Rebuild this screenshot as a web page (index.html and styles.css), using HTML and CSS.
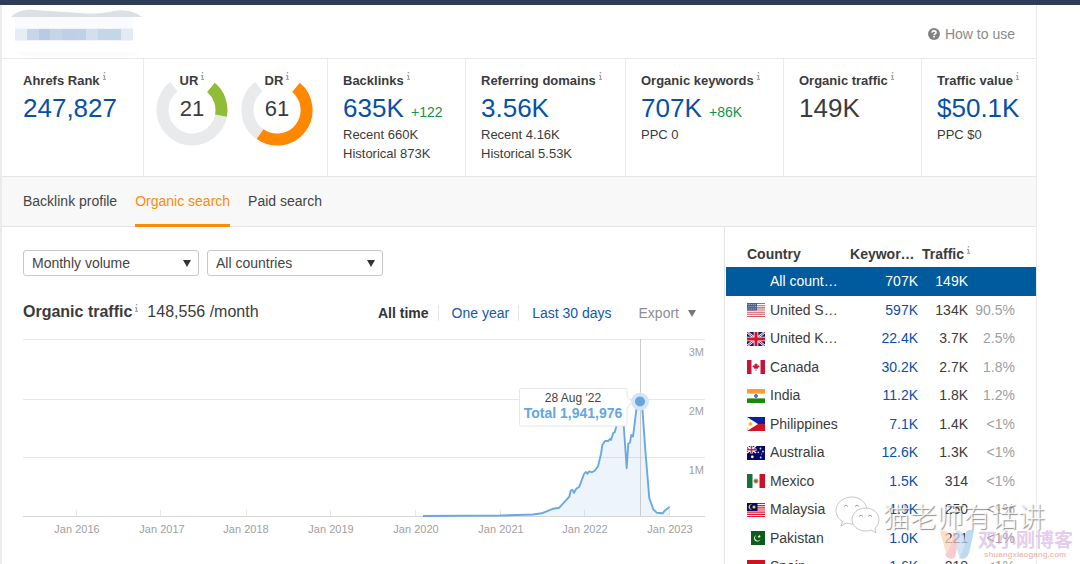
FILE: index.html
```html
<!DOCTYPE html>
<html lang="en">
<head>
<meta charset="utf-8">
<title>Site overview</title>
<link rel="stylesheet" href="styles.css">
</head>
<body>
<svg class="defs" aria-hidden="true">
  <symbol id="info" viewBox="0 0 3 8"><path d="M.8 0h1.400v1.500H.8zM0 3h2.200v4H3v1H0V7h.8V4H0z" fill="currentColor"/></symbol>
</svg>
<div class="topbar"></div>
<div class="page">
  <header class="header">
    <svg class="masked" viewBox="0 0 132 50" role="img" aria-label="Hidden site name">
      <path d="M0 10C6 4 14 2 24 3L76 6.500Q88 7 98 5Q118 0 131 10z" fill="#dcdfe4"/>
      <path d="M4 10h118v12h-118z" fill="#fafbfe"/>
      <path d="M4 21h118v13h-118z" fill="#f0f4fa"/>
      <path d="M4 22h12v11h-12z" fill="#e7edf6"/><path d="M16 22h12v11h-12z" fill="#c8d6e9"/>
      <path d="M28 22h11v11h-11z" fill="#b9cbe4"/><path d="M39 22h12v11h-12z" fill="#c5d5e8"/>
      <path d="M51 22h12v11h-12z" fill="#bfcfe6"/><path d="M63 22h12v11h-12z" fill="#c0d0e7"/>
      <path d="M75 22h12v11h-12z" fill="#d3dfee"/><path d="M87 22h23v11h-23z" fill="#c5d6e9"/>
      <path d="M110 22h12v11h-12z" fill="#e4e9f4"/>
      <path d="M4 45h126q-8 5-24 5h-76q-20 0-26-5z" fill="#fcfcfd"/>
    </svg>
    <a class="help" href="#"><svg class="help-icon" viewBox="0 0 12 12"><circle cx="6" cy="6" r="6" fill="#828282"/><path d="M4 4.600Q4.100 2.900 6 2.900Q8 2.900 8 4.500Q8 5.400 7 5.900Q6.100 6.300 6.100 7.200" fill="none" stroke="#fff" stroke-width="1.600"/><path d="M5.200 8.100h1.700v1.500h-1.700z" fill="#fff"/></svg>How to use</a>
  </header>

  <section class="metrics">
    <div class="metric first">
      <h2 class="label">Ahrefs Rank<svg class="info"><use href="#info"/></svg></h2>
      <p class="value"><a href="#">247,827</a></p>
    </div>
    <div class="metric gauges">
      <div class="gauge">
        <svg class="ring" viewBox="0 0 72 72" fill="none" stroke-width="12"><path d="M64.960 41.630A29.500 29.500 0 1 1 17.830 12.750" stroke="#e9eaec"/><path d="M54.970 13.400A29.500 29.500 0 0 1 64.960 41.630" stroke="#90bc37"/></svg>
        <h2 class="label">UR<svg class="info"><use href="#info"/></svg></h2>
        <p class="score">21</p>
      </div>
      <div class="gauge">
        <svg class="ring" viewBox="0 0 72 72" fill="none" stroke-width="12"><path d="M19.080 60.170A29.500 29.500 0 0 1 17.830 12.750" stroke="#e9eaec"/><path d="M54.970 13.400A29.500 29.500 0 0 1 19.080 60.170" stroke="#ff8800"/></svg>
        <h2 class="label">DR<svg class="info"><use href="#info"/></svg></h2>
        <p class="score">61</p>
      </div>
    </div>
    <div class="metric">
      <h2 class="label">Backlinks<svg class="info"><use href="#info"/></svg></h2>
      <p class="value"><a href="#">635K</a> <span class="delta">+122</span></p>
      <p class="note">Recent 660K</p>
      <p class="note">Historical 873K</p>
    </div>
    <div class="metric">
      <h2 class="label">Referring domains<svg class="info"><use href="#info"/></svg></h2>
      <p class="value"><a href="#">3.56K</a></p>
      <p class="note">Recent 4.16K</p>
      <p class="note">Historical 5.53K</p>
    </div>
    <div class="metric">
      <h2 class="label">Organic keywords<svg class="info"><use href="#info"/></svg></h2>
      <p class="value"><a href="#">707K</a> <span class="delta">+86K</span></p>
      <p class="note">PPC 0</p>
    </div>
    <div class="metric">
      <h2 class="label">Organic traffic<svg class="info"><use href="#info"/></svg></h2>
      <p class="value">149K</p>
    </div>
    <div class="metric">
      <h2 class="label">Traffic value<svg class="info"><use href="#info"/></svg></h2>
      <p class="value"><a href="#">$50.1K</a></p>
      <p class="note">PPC $0</p>
    </div>
  </section>

  <nav class="tabs">
    <a class="tab" href="#">Backlink profile</a>
    <a class="tab active" href="#">Organic search</a>
    <a class="tab" href="#">Paid search</a>
  </nav>

  <div class="content">
    <main class="main">
      <div class="filters">
        <span class="picker"><select class="select" aria-label="Volume"><option>Monthly volume</option></select></span>
        <span class="picker"><select class="select" aria-label="Country"><option>All countries</option></select></span>
      </div>
      <div class="chart-head">
        <h1 class="title">Organic traffic<svg class="info"><use href="#info"/></svg></h1>
        <span class="total">148,556 /month</span>
        <div class="ranges">
          <button class="range current" type="button">All time</button>
          <button class="range" type="button">One year</button>
          <button class="range" type="button">Last 30 days</button>
        </div>
        <button class="export" type="button">Export<span class="caret"></span></button>
      </div>
      <svg class="chart" viewBox="23 338 682 202">
        <g stroke="#e8e8e8"><path d="M23 339.500H705M23 399.500H705M23 457.500H705"/>
        <path d="M76.500 510v6M160.500 510v6M246.500 510v6M330.500 510v6M415.500 510v6M500.500 510v6M584.500 510v6M669.500 510v6"/></g>
        <path d="M23 516.500H705" stroke="#d6d6d6"/>
        <path d="M423 516L500 515.500L533 514.500L541.700 513.300L553.300 508.700L559.300 507.700L569.300 496.700L570.700 490.700L572.300 489.700L574 492.700L576 489L579.300 486.700L584 474L585.700 472L587.300 473.700L589.300 471.300L592 472.300L594.700 470.700L598 466.300L601 454L602.300 445L605 441L608.300 441L610 438.700L611 440L613.300 432.700L614.700 432.300L616.700 425L620 416L623.700 425L626.700 468.300L628.300 443.500L630 442.700L631.300 435L633 436.700L636.700 407L639.700 401.700L642.300 407L645.300 450L649.300 498.300L653.300 509.300L656.700 512.700L662.700 513.300L664.700 510.700L669.700 506.700V516z" fill="#5a94e0" fill-opacity=".1"/>
        <path d="M640.500 339V516" stroke="#ccc"/>
        <path d="M423 516L500 515.500L533 514.500L541.700 513.300L553.300 508.700L559.300 507.700L569.300 496.700L570.700 490.700L572.300 489.700L574 492.700L576 489L579.300 486.700L584 474L585.700 472L587.300 473.700L589.300 471.300L592 472.300L594.700 470.700L598 466.300L601 454L602.300 445L605 441L608.300 441L610 438.700L611 440L613.300 432.700L614.700 432.300L616.700 425L620 416L623.700 425L626.700 468.300L628.300 443.500L630 442.700L631.300 435L633 436.700L636.700 407L639.700 401.700L642.300 407L645.300 450L649.300 498.300L653.300 509.300L656.700 512.700L662.700 513.300L664.700 510.700L669.700 506.700" fill="none" stroke="#6aa9e0" stroke-width="1.900" stroke-linejoin="round"/>
        <circle cx="640" cy="401.500" r="9" fill="#d3e5f6"/><circle cx="640" cy="401.500" r="5" fill="#64a6df"/>
        <path d="M521 388.500H625.500a1.500 1.500 0 0 1 1.500 1.500V396L632 402L627 408V424.500a1.500 1.500 0 0 1-1.500 1.500H521a1.500 1.500 0 0 1-1.500-1.500V390a1.500 1.500 0 0 1 1.500-1.500z" fill="#fff" stroke="#e6e6e6"/>
        <g class="tip"><text class="tip-date" x="573" y="402">28 Aug '22</text><text class="tip-total" x="573" y="418">Total 1,941,976</text></g>
        <g class="y-labels"><text x="704" y="356">3M</text><text x="704" y="415">2M</text><text x="704" y="474">1M</text></g>
        <g class="x-labels"><text x="77" y="533">Jan 2016</text><text x="162" y="533">Jan 2017</text><text x="246" y="533">Jan 2018</text><text x="331" y="533">Jan 2019</text><text x="416" y="533">Jan 2020</text><text x="501" y="533">Jan 2021</text><text x="585" y="533">Jan 2022</text><text x="670" y="533">Jan 2023</text></g>
      </svg>
    </main>

    <aside class="countries">
      <table class="table">
        <colgroup><col class="c-flag"><col class="c-name"><col class="c-keys"><col class="c-traffic"><col class="c-share"></colgroup>
        <thead><tr><th class="h-country" colspan="2">Country</th><th class="h-keys">Keywords</th><th class="h-traffic" colspan="2">Traffic<svg class="info"><use href="#info"/></svg></th></tr></thead>
        <tbody>
          <tr class="selected"><td></td><td class="name">All countries</td><td class="num"><a href="#">707K</a></td><td class="num">149K</td><td></td></tr>
          <tr><td class="flag"><svg viewBox="0 0 18 14"><path fill="#fff" d="M0 0h18v14H0z"/><path d="M0 .5h18M0 2.700h18M0 4.900h18M0 7h18M0 9.200h18M0 11.300h18M0 13.500h18" stroke="#d4525e" stroke-width="1.100"/><path fill="#4b5f8c" d="M0 0h10v7.500H0z"/><path d="M.5 1.500h9M1 3.700h9M.5 5.900h9" stroke="#c3cbdc" stroke-width=".8" stroke-dasharray="1 .8"/></svg></td><td class="name">United States</td><td class="num"><a href="#">597K</a></td><td class="num">134K</td><td class="share">90.5%</td></tr>
          <tr><td class="flag"><svg viewBox="0 0 18 14"><path fill="#00207a" d="M0 0h18v14H0z"/><path d="M0 0L18 14M18 0L0 14" stroke="#fff" stroke-width="2.400"/><path d="M0 0L18 14M18 0L0 14" stroke="#d8203a"/><path d="M9 0v14M0 7h18" stroke="#fff" stroke-width="4.600"/><path d="M9 0v14M0 7h18" stroke="#d8102a" stroke-width="3"/></svg></td><td class="name">United Kingdom</td><td class="num"><a href="#">22.4K</a></td><td class="num">3.7K</td><td class="share">2.5%</td></tr>
          <tr><td class="flag"><svg viewBox="0 0 18 14"><path fill="#fff" d="M0 0h18v14H0z"/><path fill="#c71437" d="M0 0h4.500v14H0zM13.500 0H18v14h-4.500zM9 3l.9 1.500.8-.4-.2 2 1.400-.8.2.8.7.1-2 1.900.2.700-1.700-.2V11h-.6V8.600L7 8.800l.2-.7-2-1.900.7-.1.2-.8 1.400.8-.2-2 .8.400z"/></svg></td><td class="name">Canada</td><td class="num"><a href="#">30.2K</a></td><td class="num">2.7K</td><td class="share">1.8%</td></tr>
          <tr><td class="flag"><svg viewBox="0 0 18 14"><path fill="#fff" d="M0 0h18v14H0z"/><path fill="#ff9a36" d="M0 0h18v4.600H0z"/><path fill="#158a0c" d="M0 9.400h18V14H0z"/><circle cx="9" cy="7" r="1.500" fill="#7d7dc4" stroke="#33339b" stroke-width=".7"/></svg></td><td class="name">India</td><td class="num"><a href="#">11.2K</a></td><td class="num">1.8K</td><td class="share">1.2%</td></tr>
          <tr><td class="flag"><svg viewBox="0 0 18 14"><path fill="#0820a5" d="M0 0h18v7H0z"/><path fill="#d01428" d="M0 7h18v7H0z"/><path fill="#fff" d="M0 0l11 7-11 7z"/><path fill="#f7bd2b" d="M3.500 4.500l.7 1.300 1.600-.2-.8 1.400.8 1.400-1.600-.2-.7 1.300-.7-1.300-1.600.2.8-1.400-.8-1.400 1.600.2zM0 1l1.300 1.300L0 3zM0 11l1.300.8L0 13z"/></svg></td><td class="name">Philippines</td><td class="num"><a href="#">7.1K</a></td><td class="num">1.4K</td><td class="share">&lt;1%</td></tr>
          <tr><td class="flag"><svg viewBox="0 0 18 14"><path fill="#06066b" d="M0 0h18v14H0z"/><path d="M0 0l9 7M9 0L0 7" stroke="#fff" stroke-width="1.500"/><path d="M4.500 0v7.500M0 3.700h9.500" stroke="#fff" stroke-width="2.600"/><path d="M4.500 0v7.500M0 3.700h9.500" stroke="#e02038" stroke-width="1.400"/><circle cx="5.300" cy="10.800" r="1.400" fill="#fff"/><g fill="#dcdcf3"><circle cx="13.500" cy="2.500" r=".9"/><circle cx="11.300" cy="6.300" r=".9"/><circle cx="16" cy="5.500" r=".9"/><circle cx="13.700" cy="11.500" r=".9"/><circle cx="14.600" cy="8" r=".5"/></g></svg></td><td class="name">Australia</td><td class="num"><a href="#">12.6K</a></td><td class="num">1.3K</td><td class="share">&lt;1%</td></tr>
          <tr><td class="flag"><svg viewBox="0 0 18 14"><path fill="#fff" d="M0 0h18v14H0z"/><path fill="#16713a" d="M0 0h5.500v14H0z"/><path fill="#cf1126" d="M12.500 0H18v14h-5.500z"/><circle cx="9" cy="7" r="2.500" fill="#b3a478"/><path d="M7 7q2-3 3.500 0L9 9z" fill="#776033"/></svg></td><td class="name">Mexico</td><td class="num"><a href="#">1.5K</a></td><td class="num">314</td><td class="share">&lt;1%</td></tr>
          <tr><td class="flag"><svg viewBox="0 0 18 14"><path fill="#fff" d="M0 0h18v14H0z"/><path d="M0 .5h18M0 2.700h18M0 4.900h18M0 7h18M0 9.200h18M0 11.300h18M0 13.500h18" stroke="#e0142b" stroke-width="1.200"/><path fill="#08086b" d="M0 0h10.500v8H0z"/><path d="M5.200 1.600A2.600 2.600 0 1 0 5.200 6.300A2.200 2.200 0 1 1 5.200 1.600z" fill="#fdd20a"/><circle cx="7" cy="3.900" r="1.500" fill="#fdd20a"/></svg></td><td class="name">Malaysia</td><td class="num"><a href="#">1.9K</a></td><td class="num">250</td><td class="share">&lt;1%</td></tr>
          <tr><td class="flag"><svg viewBox="0 0 18 14"><path fill="#0b5d17" d="M4 0h14v14H4z"/><path d="M9.600 4A3.300 3.300 0 1 0 13.500 8.300A3 3 0 1 1 9.600 4z" fill="#fff"/><path d="M12.300 3.800l.5 1 1 .2-.8.700.2 1-1-.4-.9.600.1-1.100-.8-.7 1.100-.2z" fill="#fff"/></svg></td><td class="name">Pakistan</td><td class="num"><a href="#">1.0K</a></td><td class="num">221</td><td class="share">&lt;1%</td></tr>
          <tr><td class="flag"><svg viewBox="0 0 18 14"><path fill="#ffc400" d="M0 0h18v14H0z"/><path fill="#cf1220" d="M0 0h18v4H0zM0 10h18v4H0z"/></svg></td><td class="name">Spain</td><td class="num"><a href="#">1.6K</a></td><td class="num">218</td><td class="share">&lt;1%</td></tr>
        </tbody>
      </table>
    </aside>
  </div>
</div>

<div class="wm-chat">
  <svg class="wm-chat-icon" viewBox="0 0 46 40" fill="#fff" fill-opacity=".93" stroke="#b0b0b0" stroke-width=".7"><path d="M17 2C8 2 1 8 1 15.500C1 20 3.500 24 7.500 26.500L6 31L11.500 28Q14 29 17 29C25 29 32 23 32 15.500S25 2 17 2z"/><path d="M31 13C23 13 17 18 17 24.500S23 36 31 36Q34 36 36.500 35L41 38L40 33.500Q44 30 44 25C44 18 38 13 31 13z"/><path d="M9 11.500q2-3 4 0M20 11.500q2-3 4 0M24 21.500q2-3 4 0M33 21.500q2-3 4 0" stroke="#777" fill="none"/></svg>
  <span>猫老师有话讲</span>
</div>
<div class="wm-blog">
  <svg class="wm-blog-icon" viewBox="0 0 34 32" opacity=".72"><path d="M0 2Q6 0 9 5L16 25L12 30Q7 27 5 20z" fill="#fbd4b5"/><path d="M13 3L20 6L15 28Q12 31 8 29L5 26Q12 19 13 3z" fill="#f4b9bd"/><path d="M16 2Q21 0 24 7L28 20L22 30Q18 27 17 20z" fill="#c3daf5"/><path d="M26 2Q31 0 34 2L29 24Q26 32 19 29Q26 18 26 2z" fill="#a7cdea"/></svg>
  <div><div class="wm-name">双小刚博客</div><div class="wm-url">shuangxiaogang.com</div></div>
</div>
</body>
</html>
```
FILE: styles.css
```css
* { box-sizing: border-box; }
body { margin: 0; height: 100vh; overflow: hidden; position: relative; background: #fff; color: #3b3b3b; font: 14px/18px "Liberation Sans", Arial, sans-serif; }
h1, h2, p { margin: 0; }
a { color: #0750a8; text-decoration: none; }
button { padding: 0; border: 0; background: none; color: inherit; font: inherit; cursor: pointer; }
.defs { position: absolute; width: 0; height: 0; }
.info { width: 3px; height: 8px; margin-left: 3px; vertical-align: 5px; color: #a5a5a5; }
.topbar { height: 5px; background: #2e3d57; }
.page { margin-right: 43px; border-left: 2px solid #ebebec; border-right: 1px solid #ebebec; }

.header { display: flex; justify-content: space-between; align-items: center; height: 54px; padding: 0 21px 0 9px; border-bottom: 1px solid #e9e9e9; }
.masked { width: 132px; height: 50px; }
.help { display: flex; align-items: center; gap: 5px; color: #8a8a8a; padding-top: 5px; }
.help-icon { width: 12px; height: 12px; }

.metrics { display: grid; grid-template-columns: 142fr 184fr 138fr 160fr 158fr 138fr 114fr; border-bottom: 1px solid #e6e6e6; }
.metric { padding: 13px 0 13px 15px; border-right: 1px solid #ebebeb; white-space: nowrap; }
.metric:last-child { border-right: 0; }
.metric.first { padding-left: 21px; }
.label { font-size: 13px; line-height: 18px; }
.value { font-size: 26px; line-height: 36px; height: 35px; }
.delta { font-size: 14px; color: #12924a; }
.note { font-size: 13px; line-height: 19px; }
.metric.gauges { display: flex; gap: 13px; padding-left: 12px; }
.gauge { display: grid; grid-template: 18px 1fr / 72px; height: 74px; text-align: center; }
.ring { grid-area: 1 / 1 / 3 / 2; width: 72px; height: 72px; align-self: end; }
.gauge .label { grid-area: 1 / 1; }
.score { grid-area: 2 / 1; font-size: 22px; line-height: 38px; }

.tabs { display: flex; gap: 18px; height: 50px; padding-left: 21px; background: #f8f8f8; border-bottom: 1px solid #e4e4e4; }
.tab { height: 50px; line-height: 49px; color: #444; }
.tab.active { color: #ff8a0a; border-bottom: 3px solid #ff8a0a; }

.content { display: flex; }
.main { flex: 1; min-width: 0; padding: 23px 19px 0 21px; }
.filters { display: flex; gap: 8px; }
.picker { position: relative; width: 176px; }
.picker::after { content: ""; position: absolute; right: 8px; top: 10px; border: 4px solid transparent; border-top: 7px solid #333; border-bottom: 0; pointer-events: none; }
.select { width: 100%; height: 26px; padding: 0 8px; appearance: none; border: 1px solid #c8c8c8; border-radius: 3px; background: #fff; color: #444; font: inherit; }
.chart-head { display: flex; align-items: center; height: 62px; padding: 10px 9px 0 0; }
.title, .total { font-size: 16px; line-height: 20px; }
.total { margin-left: 9px; }
.ranges { display: flex; margin-left: auto; padding-top: 2px; }
.range { height: 16px; line-height: 16px; padding: 0 9px 0 13px; border-right: 1px solid #e6e6e6; color: #1557b0; }
.range:last-child { border-right: 0; }
.range.current { color: #333; font-weight: bold; }
.export { display: flex; align-items: center; gap: 9px; margin-left: 18px; padding-top: 2px; color: #8e8e8e; }
.caret { border: 4px solid transparent; border-top: 7px solid #777; border-bottom: 0; }
.chart { display: block; width: 100%; height: auto; }
.tip, .x-labels { text-anchor: middle; }
.tip-date { font-size: 12px; fill: #444; }
.tip-total { font-size: 14px; font-weight: bold; fill: #64a6df; }
.x-labels, .y-labels { font-size: 11px; fill: #a0a0a0; }
.y-labels { text-anchor: end; }

.countries { flex: 0 0 312px; padding-left: 1px; border-left: 1px solid #e6e6e6; }
.table { width: 100%; table-layout: fixed; border-collapse: collapse; }
.table th, .table td { padding: 0 0 1px; white-space: nowrap; }
.c-flag { width: 44px; }
.c-name { width: 70px; }
.c-keys { width: 78px; }
.c-traffic { width: 50px; }
.table thead tr { height: 40px; }
.table tbody tr { height: 28px; }
.table tbody tr:nth-child(odd) { height: 29px; }
.table th { padding-top: 14px; text-align: left; }
.table .h-country { padding-left: 21px; }
.table .h-keys { padding-left: 10px; padding-right: 2px; overflow: hidden; text-overflow: ellipsis; }
.table .h-traffic { padding-left: 4px; }
.table .flag { padding: 0 0 0 21px; }
.flag svg { display: block; width: 18px; height: 14px; }
.name { overflow: hidden; text-overflow: ellipsis; }
.num { text-align: right; }
.table .share { padding-right: 21px; text-align: right; color: #a0a0a0; }
.selected { background: #005a9e; color: #fff; }
.selected a { color: inherit; }

.wm-chat { position: absolute; left: 835px; top: 495px; display: flex; gap: 2px; color: rgba(255, 255, 255, .8); font: 300 27px/42px "Noto Sans CJK SC", sans-serif; text-shadow: 1px 1px 1px rgba(90, 90, 90, .7); white-space: nowrap; }
.wm-chat-icon { width: 46px; height: 40px; }
.wm-blog { position: absolute; right: 7px; bottom: 3px; display: flex; align-items: center; gap: 4px; white-space: nowrap; }
.wm-blog-icon { width: 34px; height: 32px; }
.wm-name { color: rgba(205, 160, 220, .55); font: bold 19px/20px "Noto Sans CJK SC", sans-serif; }
.wm-url { padding-left: 6px; color: rgba(225, 150, 125, .6); font-size: 8px; font-weight: bold; line-height: 12px; }
```
